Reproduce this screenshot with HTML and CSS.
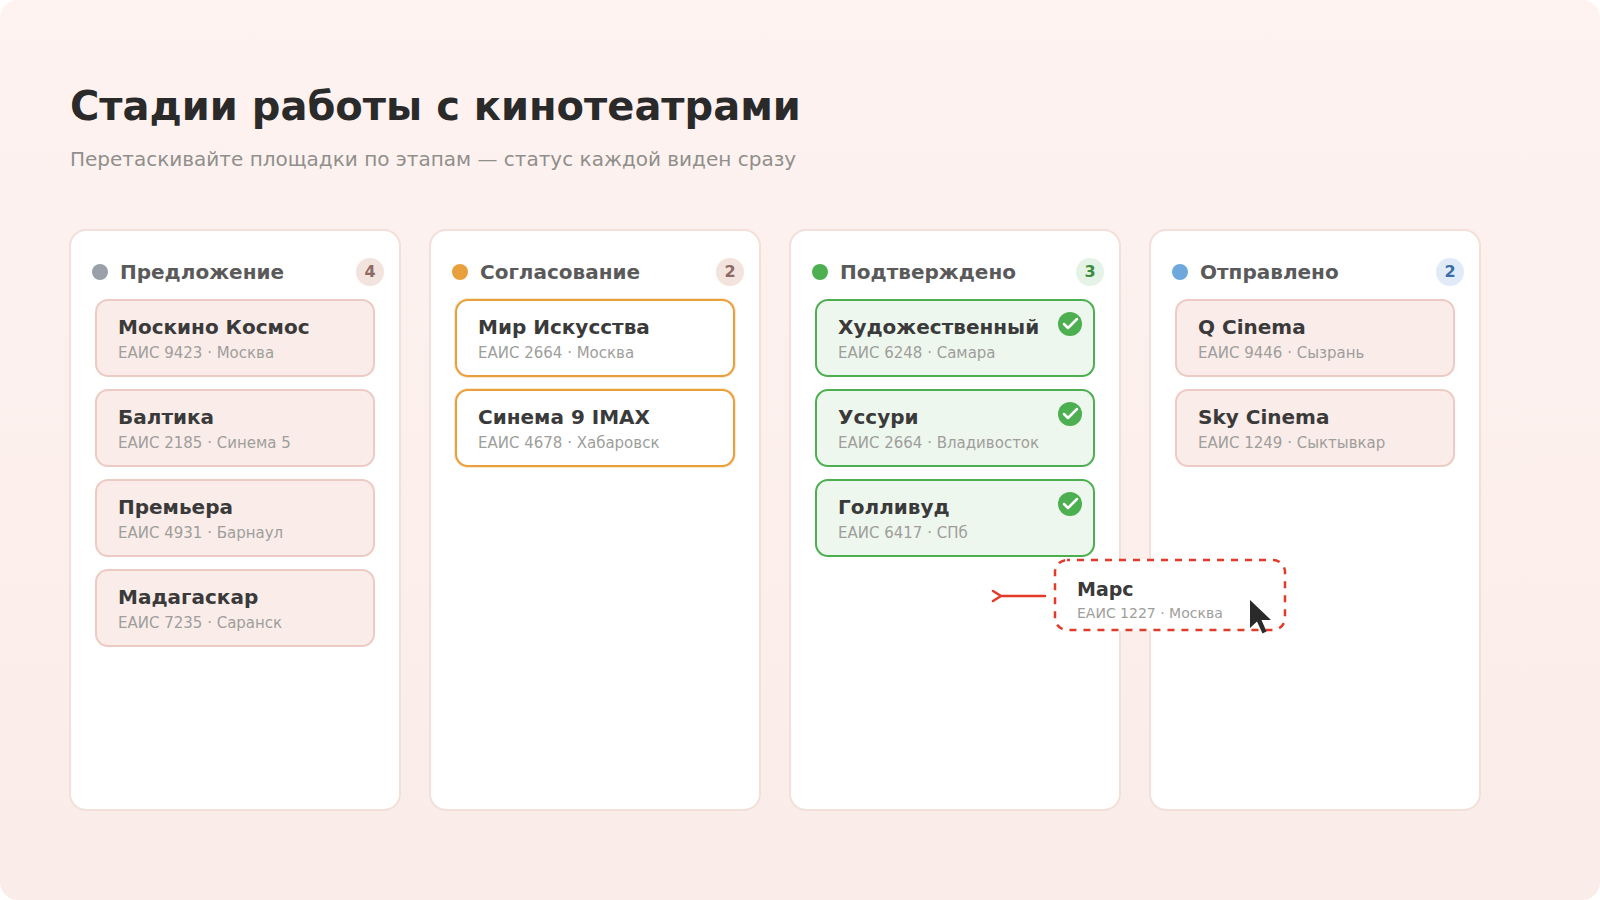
FILE: index.html
```html
<!DOCTYPE html>
<html lang="ru">

<head>
    <meta charset="UTF-8">
    <meta name="viewport" content="width=device-width, initial-scale=1.0">
    <title>Стадии работы с кинотеатрами</title>
    <link rel="stylesheet" href="styles.css">
</head>

<body>
    <svg class="sprite" width="0" height="0" aria-hidden="true">
        <symbol id="check" viewBox="0 0 24 24">
            <circle cx="12" cy="12" r="12" />
            <path d="M6 12l4 4 9-9" fill="none" stroke="#fff" stroke-width="2.5" stroke-linecap="round" stroke-linejoin="round" />
        </symbol>
    </svg>

    <main class="page">
        <header class="page-header">
            <h1>Стадии работы с кинотеатрами</h1>
            <p>Перетаскивайте площадки по этапам — статус каждой виден сразу</p>
        </header>

        <div class="board">
            <section class="column offer">
                <header>
                    <span class="dot"></span>
                    <h2>Предложение</h2>
                    <span class="count">4</span>
                </header>
                <div class="cards">
                    <article class="card">
                        <h3>Москино Космос</h3>
                        <p>ЕАИС 9423 · Москва</p>
                    </article>
                    <article class="card">
                        <h3>Балтика</h3>
                        <p>ЕАИС 2185 · Синема 5</p>
                    </article>
                    <article class="card">
                        <h3>Премьера</h3>
                        <p>ЕАИС 4931 · Барнаул</p>
                    </article>
                    <article class="card">
                        <h3>Мадагаскар</h3>
                        <p>ЕАИС 7235 · Саранск</p>
                    </article>
                </div>
            </section>

            <section class="column approval">
                <header>
                    <span class="dot"></span>
                    <h2>Согласование</h2>
                    <span class="count">2</span>
                </header>
                <div class="cards">
                    <article class="card">
                        <h3>Мир Искусства</h3>
                        <p>ЕАИС 2664 · Москва</p>
                    </article>
                    <article class="card">
                        <h3>Синема 9 IMAX</h3>
                        <p>ЕАИС 4678 · Хабаровск</p>
                    </article>
                </div>
            </section>

            <section class="column confirmed">
                <header>
                    <span class="dot"></span>
                    <h2>Подтверждено</h2>
                    <span class="count">3</span>
                </header>
                <div class="cards">
                    <article class="card">
                        <h3>Художественный</h3>
                        <p>ЕАИС 6248 · Самара</p>
                        <svg class="check" aria-hidden="true"><use href="#check" /></svg>
                    </article>
                    <article class="card">
                        <h3>Уссури</h3>
                        <p>ЕАИС 2664 · Владивосток</p>
                        <svg class="check" aria-hidden="true"><use href="#check" /></svg>
                    </article>
                    <article class="card">
                        <h3>Голливуд</h3>
                        <p>ЕАИС 6417 · СПб</p>
                        <svg class="check" aria-hidden="true"><use href="#check" /></svg>
                    </article>
                </div>

                <!-- card being dragged in from the next stage -->
                <article class="dragged">
                    <svg class="outline" viewBox="0 0 232 72" aria-hidden="true">
                        <rect x="1" y="1" width="230" height="70" rx="12" />
                    </svg>
                    <svg class="arrow" viewBox="0 0 60 16" aria-hidden="true">
                        <path d="M55 8H11M3 3l8 5-8 5" />
                    </svg>
                    <h3>Марс</h3>
                    <p>ЕАИС 1227 · Москва</p>
                    <svg class="cursor" viewBox="0 0 22 34" aria-hidden="true">
                        <path d="M0 0v28l7-6.5 5.5 12 4-2-5-11.500H21z" />
                    </svg>
                </article>
            </section>

            <section class="column sent">
                <header>
                    <span class="dot"></span>
                    <h2>Отправлено</h2>
                    <span class="count">2</span>
                </header>
                <div class="cards">
                    <article class="card">
                        <h3>Q Cinema</h3>
                        <p>ЕАИС 9446 · Сызрань</p>
                    </article>
                    <article class="card">
                        <h3>Sky Cinema</h3>
                        <p>ЕАИС 1249 · Сыктывкар</p>
                    </article>
                </div>
            </section>
        </div>
    </main>
</body>

</html>
```
FILE: styles.css
```css
*,
*::after,
*::before {
    box-sizing: border-box;
}

body {
    font-family: 'DejaVu Sans', Verdana, sans-serif;
    background: #fff;
    color: #3a3a3a;
    margin: 0;
}

h1,
h2,
h3,
p {
    margin: 0;
}

.sprite {
    position: absolute;
}

.page {
    display: flex;
    flex-direction: column;
    gap: 56px;
    min-height: 100vh;
    padding: 80px 119px 89px 69px;
    border-radius: 18px;
    background: linear-gradient(#fef3f1, #faece8);
}

.page-header {
    display: flex;
    flex-direction: column;
    gap: 14px;
    padding-left: 1px;

    h1 {
        color: #2a2a2a;
        font-size: 40px;
        line-height: 52px;
    }

    p {
        color: #8f8f8b;
        font-size: 20px;
        line-height: 27px;
    }
}

.board {
    display: grid;
    grid-template-columns: repeat(4, 1fr);
    gap: 28px;
    flex: 1;
}

.column {
    position: relative;
    background: #fff;
    border: 2px solid #f4dfd9;
    border-radius: 17px;
    padding: 27px 14px;

    header {
        display: flex;
        align-items: center;
        gap: 12px;
        height: 28px;
        padding: 0 1px 0 7px;
    }

    h2 {
        flex: 1;
        color: #5a5a5a;
        font-size: 20px;
        line-height: 28px;
    }
}

.dot {
    width: 16px;
    height: 16px;
    border-radius: 50%;
}

.count {
    width: 28px;
    border-radius: 50%;
    background: #f3e3df;
    color: #8d6a63;
    font-size: 16px;
    font-weight: bold;
    line-height: 28px;
    text-align: center;
}

.cards {
    display: flex;
    flex-direction: column;
    gap: 12px;
    padding: 13px 10px;
}

.card {
    position: relative;
    background: #faece9;
    border: 2px solid #edcbc4;
    border-radius: 13px;
    padding: 14px 21px 8px;

    h3 {
        font-size: 20px;
        line-height: 24px;
    }

    p {
        color: #9e9e9b;
        font-size: 15px;
        line-height: 28px;
    }
}

.check {
    position: absolute;
    top: 11px;
    right: 11px;
    width: 24px;
    height: 24px;
    fill: #4caf50;
}

.offer .dot {
    background: #9aa0a8;
}

.approval {
    .dot {
        background: #e8a03c;
    }

    .card {
        background: #fff;
        border-color: #e8a03c;
        box-shadow: 0 0 0 1px rgba(232, 160, 60, .25);
    }
}

.confirmed {
    z-index: 1;

    .dot {
        background: #4caf50;
    }

    .count {
        background: #e4f3e5;
        color: #388e3c;
    }

    .card {
        background: #eef7ee;
        border-color: #4caf50;
    }
}

.sent {
    .dot {
        background: #6fa8dc;
    }

    .count {
        background: #e1ebf7;
        color: #3b6ea8;
    }
}

.dragged {
    position: absolute;
    top: 328px;
    left: 263px;
    width: 232px;
    height: 72px;
    padding: 18px 23px;
    border-radius: 13px;
    background: #fff;

    h3 {
        position: relative;
        font-size: 19px;
        line-height: 24px;
    }

    p {
        position: relative;
        color: #9e9e9b;
        font-size: 14px;
        line-height: 24px;
    }
}

.outline {
    position: absolute;
    inset: 0;
    fill: none;
    stroke: #e23b2a;
    stroke-width: 2.5;
    stroke-dasharray: 7 7;
    stroke-dashoffset: 4;
    overflow: visible;
}

.arrow {
    position: absolute;
    top: 29px;
    right: 236px;
    width: 60px;
    fill: none;
    stroke: #e23b2a;
    stroke-width: 2.5;
    stroke-linecap: round;
}

.cursor {
    position: absolute;
    top: 41px;
    left: 196px;
    width: 22px;
    fill: #2a2a2a;
}
```
